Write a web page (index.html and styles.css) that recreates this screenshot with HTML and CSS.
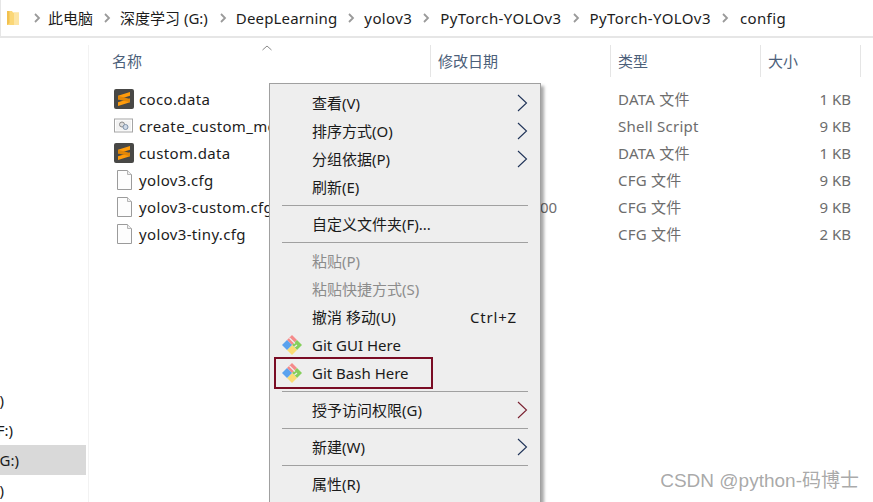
FILE: index.html
```html
<!DOCTYPE html>
<html lang="zh">
<head>
<meta charset="utf-8">
<title>config</title>
<link rel="stylesheet" href="styles.css">
</head>
<body>
<svg class="defs" width="0" height="0" aria-hidden="true">
  <defs>
    <symbol id="chev" viewBox="0 0 8 12"><path d="M2 2l4 4-4 4" fill="none" stroke="#9a9a9a" stroke-width="1.8"/></symbol>
    <symbol id="arrow" viewBox="0 0 11 18"><path d="M1 1l8.500 8-8.500 8" fill="none" stroke="#1f3358" stroke-width="1.1"/></symbol>
    <symbol id="arrow-red" viewBox="0 0 11 18"><path d="M1 1l8.500 8-8.500 8" fill="none" stroke="#7a2030" stroke-width="1.1"/></symbol>
    <symbol id="subl" viewBox="0 0 20 20">
      <rect width="20" height="20" rx="2" fill="#484846"/>
      <path d="M16 3v3.800L4 10.500V6.800z M16 9.500v3.800L4 17v-3.800z" fill="#ff9c0c"/>
      <path d="M4 6.800L16 10v3.300L4 10.500z" fill="#e08608"/>
    </symbol>
    <symbol id="page" viewBox="0 0 15 20">
      <path d="M.5.500h10l4 4v15H.5z" fill="#fdfdfd" stroke="#9b9b9b"/>
      <path d="M10.500.500v4h4" fill="#eee" stroke="#b5b5b5"/>
    </symbol>
    <symbol id="git" viewBox="0 0 20 20">
      <path d="M10 0l5 5-5 5-5-5z" fill="#f58a8a"/>
      <path d="M15 5l5 5-5 5-5-5z" fill="#86cf5c"/>
      <path d="M10 10l5 5-5 5-5-5z" fill="#fbdc74"/>
      <path d="M5 5l5 5-5 5-5-5z" fill="#5aa2ee"/>
      <path d="M7.500 3l5.500 5.500M12.500 12l2.500-2" stroke="#eeeeee" stroke-width="1.200" fill="none"/>
    </symbol>
  </defs>
</svg>

<header class="addr">
  <svg class="folder" viewBox="0 0 12 16" width="12" height="16" aria-hidden="true">
    <path d="M0 1h5l1 1.500h6V15H0z" fill="#fbd777"/>
    <path d="M0 1h2.500v12L0 15z" fill="#f2c14f"/>
    <path d="M7 3h5v12H7z" fill="#fde5a4"/>
  </svg>
  <svg class="chev first" aria-hidden="true"><use href="#chev"/></svg>
  <span>此电脑</span>
  <svg class="chev" aria-hidden="true"><use href="#chev"/></svg>
  <span>深度学习 (G:)</span>
  <svg class="chev wide" aria-hidden="true"><use href="#chev"/></svg>
  <span class="lat tight">DeepLearning</span>
  <svg class="chev" aria-hidden="true"><use href="#chev"/></svg>
  <span class="lat">yolov3</span>
  <svg class="chev plus1" aria-hidden="true"><use href="#chev"/></svg>
  <span class="lat">PyTorch-YOLOv3</span>
  <svg class="chev plus1" aria-hidden="true"><use href="#chev"/></svg>
  <span class="lat">PyTorch-YOLOv3</span>
  <svg class="chev plus2" aria-hidden="true"><use href="#chev"/></svg>
  <span class="lat">config</span>
</header>

<div class="main">
  <nav class="side">
    <div class="drive d1">本地磁盘 (D:)</div>
    <div class="drive d2">软件 (F:)</div>
    <div class="drive d3 sel">深度学习 (G:)</div>
    <div class="drive d4">新加卷 (H:)</div>
  </nav>
  <section class="list">
    <div class="head">
      <div class="th"><span>名称</span><svg class="caret" viewBox="0 0 10 6" width="10" height="6" aria-hidden="true"><path d="M.5 5L5 1l4.500 4" fill="none" stroke="#8a8a8a"/></svg></div>
      <div class="th">修改日期</div>
      <div class="th">类型</div>
      <div class="th">大小</div>
    </div>
    <div class="row"><div class="name"><svg class="ico" aria-hidden="true"><use href="#subl"/></svg>coco.data</div><div></div><div class="type">DATA 文件</div><div class="size">1 KB</div></div>
    <div class="row"><div class="name"><svg class="ico" viewBox="0 0 20 20" aria-hidden="true"><rect x=".5" y="3" width="18" height="13" fill="#fff" stroke="#a5a5a5"/><rect x="2" y="4.500" width="15" height="10" fill="#f2f2f2"/><circle cx="8" cy="8.500" r="2.500" fill="#ddd" stroke="#8b8b8b"/><circle cx="11.500" cy="11" r="2.500" fill="#cfd9e6" stroke="#7f93aa"/></svg>create_custom_model.sh</div><div></div><div class="type">Shell Script</div><div class="size">9 KB</div></div>
    <div class="row"><div class="name"><svg class="ico" aria-hidden="true"><use href="#subl"/></svg>custom.data</div><div></div><div class="type">DATA 文件</div><div class="size">1 KB</div></div>
    <div class="row"><div class="name"><svg class="ico pg" aria-hidden="true"><use href="#page"/></svg>yolov3.cfg</div><div></div><div class="type">CFG 文件</div><div class="size">9 KB</div></div>
    <div class="row"><div class="name"><svg class="ico pg" aria-hidden="true"><use href="#page"/></svg>yolov3-custom.cfg</div><div class="date">2021/11/11 10:00</div><div class="type">CFG 文件</div><div class="size">9 KB</div></div>
    <div class="row"><div class="name"><svg class="ico pg" aria-hidden="true"><use href="#page"/></svg>yolov3-tiny.cfg</div><div></div><div class="type">CFG 文件</div><div class="size">2 KB</div></div>
  </section>
</div>

<div class="menu" role="menu">
  <div class="mi"><span>查看(V)</span><svg class="arrow" aria-hidden="true"><use href="#arrow"/></svg></div>
  <div class="mi"><span>排序方式(O)</span><svg class="arrow" aria-hidden="true"><use href="#arrow"/></svg></div>
  <div class="mi"><span>分组依据(P)</span><svg class="arrow" aria-hidden="true"><use href="#arrow"/></svg></div>
  <div class="mi"><span>刷新(E)</span></div>
  <div class="sep"></div>
  <div class="mi"><span>自定义文件夹(F)...</span></div>
  <div class="sep"></div>
  <div class="mi off"><span>粘贴(P)</span></div>
  <div class="mi off"><span>粘贴快捷方式(S)</span></div>
  <div class="mi"><span>撤消 移动(U)</span><span class="key">Ctrl+Z</span></div>
  <div class="mi"><svg class="git" aria-hidden="true"><use href="#git"/></svg><span>Git GUI Here</span></div>
  <div class="mi"><svg class="git" aria-hidden="true"><use href="#git"/></svg><span>Git Bash Here</span><div class="mark"></div></div>
  <div class="sep"></div>
  <div class="mi"><span>授予访问权限(G)</span><svg class="arrow" aria-hidden="true"><use href="#arrow-red"/></svg></div>
  <div class="sep"></div>
  <div class="mi"><span>新建(W)</span><svg class="arrow" aria-hidden="true"><use href="#arrow"/></svg></div>
  <div class="sep"></div>
  <div class="mi"><span>属性(R)</span></div>
</div>

<div class="mark-wm">CSDN @python-码博士</div>
</body>
</html>
```
FILE: styles.css
```css
* { box-sizing: border-box; }
html, body { height: 100%; }
body {
  margin: 0;
  width: 873px;
  height: 502px;
  overflow: hidden;
  background: #fff;
  color: #1a1a1a;
  font: 15px/20px "Noto Sans", "Noto Sans CJK SC", sans-serif;
  position: relative;
}
.defs { position: absolute; }

.addr {
  height: 38px;
  display: flex;
  align-items: center;
  padding-left: 6px;
  border-bottom: 2px solid #e6e6e6;
  border-left: 1px solid #e6e6e6;
  white-space: nowrap;
  color: #1c1c1c;
}
.folder { margin-right: 14px; flex: none; }
.chev { width: 8px; height: 12px; margin: 0 9px 0 10px; flex: none; }
.chev.first { margin-left: 0; margin-right: 7px; }
.chev.wide { margin-left: 11px; margin-right: 9px; }
.chev.plus1 { margin-right: 10px; }
.chev.plus2 { margin-right: 11px; }
.lat { letter-spacing: .4px; }
.lat.tight { letter-spacing: .15px; }

.main { display: flex; height: 464px; }
.side {
  width: 89px;
  flex: none;
  margin-top: 7px;
  padding-top: 340px;
  border-right: 1px solid #f2f2f2;
  overflow: hidden;
}
.drive {
  width: 86px;
  height: 30px;
  display: flex;
  justify-content: flex-end;
  align-items: center;
  white-space: nowrap;
  overflow: hidden;
}
.d1, .d4 { padding-right: 82px; }
.d2 { padding-right: 73px; }
.d3 { padding-right: 67px; }
.sel { background: #d9d9d9; }

.list { flex: none; width: 784px; padding: 7px 0 0 22px; }
.head, .row {
  display: grid;
  grid-template-columns: 320px 180px 150px 100px;
}
.head { height: 32px; margin-bottom: 8px; }
.th {
  padding-left: 7px;
  line-height: 32px;
  border-right: 1px solid #e5e5e5;
  color: #4c607a;
  font-size: 15px;
  position: relative;
}
.th:first-child { padding-left: 1px; }
.caret { position: absolute; left: 151px; top: 0; }
.row { height: 27px; align-items: center; }
.name {
  display: flex;
  align-items: center;
  padding-left: 3px;
  white-space: nowrap;
  overflow: hidden;
  color: #1c1c1c;
  letter-spacing: .35px;
}
.ico { width: 20px; height: 20px; margin-right: 5px; flex: none; }
.ico.pg { width: 15px; margin: 0 7px 0 3px; }
.date, .type, .size { color: #6d6d6d; white-space: nowrap; }
.date { padding-left: 4px; }
.type { padding-left: 7px; letter-spacing: .25px; }
.size { text-align: right; padding-right: 10px; }

.menu {
  position: absolute;
  left: 269px;
  top: 83px;
  width: 272px;
  height: 430px;
  padding: 5px 0 0;
  background: #eeeeee;
  border: 1px solid #a0a0a0;
  box-shadow: 3px 3px 3px rgba(0, 0, 0, .35);
}
.mi {
  height: 28px;
  display: flex;
  align-items: center;
  padding: 0 12px 0 42px;
  position: relative;
  color: #1a1a1a;
  white-space: nowrap;
}
.mi.off { color: #8c8c8c; }
.key { margin-left: auto; margin-right: 11px; letter-spacing: .8px; }
.arrow { width: 11px; height: 18px; margin-left: auto; }
.git { position: absolute; left: 12px; top: 4px; width: 20px; height: 20px; }
.mark {
  position: absolute;
  left: 4px;
  top: -2px;
  width: 159px;
  height: 32px;
  border: 2px solid #7a0c24;
}
.sep { height: 9px; padding-top: 4px; margin: 0 12px; }
.sep::before { content: ""; display: block; height: 1px; background: #a0a0a0; }

.mark-wm {
  position: absolute;
  right: 14px;
  top: 469px;
  font-size: 19px;
  line-height: 24px;
  color: rgba(120, 120, 120, .65);
  white-space: nowrap;
  font-family: "Liberation Sans", "Noto Sans CJK SC", sans-serif;
}
```
